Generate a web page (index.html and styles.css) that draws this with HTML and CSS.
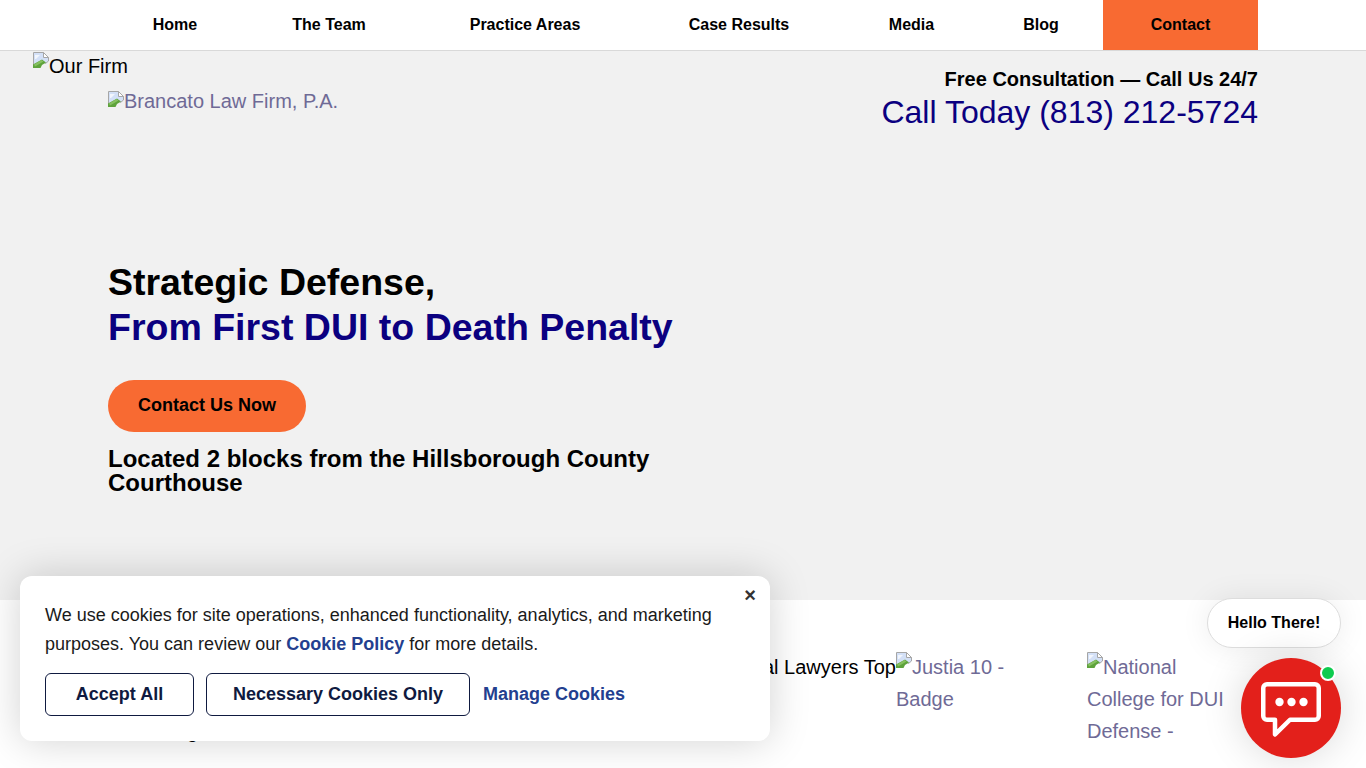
FILE: index.html
```html
<!DOCTYPE html>
<html lang="en">
<head>
  <meta charset="UTF-8" />
  <meta name="viewport" content="width=device-width, initial-scale=1.0" />
  <title>Brancato Law Firm, P.A.</title>
  <link rel="stylesheet" href="styles.css">
</head>
<body>
<svg class="defs" width="0" height="0" aria-hidden="true">
  <symbol id="broken" viewBox="0 0 16 16">
    <path d="M.5 .5H10.5L15.5 5.5V9L12.5 11.5 9.5 9 .5 15.5Z" fill="#d3e0f7" stroke="#a6a6a6" stroke-width="1" stroke-linejoin="round"/>
    <path d="M10.5 .5V5.5H15.5Z" fill="#fff" stroke="#a6a6a6" stroke-width="1" stroke-linejoin="round"/>
    <path d="M2 3H7L3 7 2 7Z" fill="#f2f6fd"/>
    <path d="M0 16V12.5L9 7.5 13 10.5 9 13 7.5 16Z" fill="#5ea33c"/>
    <path d="M1 12.5 8.5 8 10.5 9.5 2 14.5Z" fill="#86c060"/>
  </symbol>
</svg>

<nav class="main-nav">
  <ul class="nav-list">
    <li><a href="#">Home</a></li>
    <li><a href="#">The Team</a></li>
    <li><a href="#">Practice Areas</a></li>
    <li><a href="#">Case Results</a></li>
    <li><a href="#">Media</a></li>
    <li><a href="#">Blog</a></li>
    <li class="nav-contact"><a href="#">Contact</a></li>
  </ul>
</nav>

<section class="hero">
  <div class="firm-label"><svg class="broken-icon raised"><use href="#broken"/></svg>Our Firm</div>
  <div class="hero-inner">
    <div class="hero-top">
      <a class="logo" href="#"><svg class="broken-icon"><use href="#broken"/></svg>Brancato Law Firm, P.A.</a>
      <div class="phone-box">
        <div class="phone-free">Free Consultation — Call Us 24/7</div>
        <a class="phone-num" href="#">Call Today (813) 212-5724</a>
      </div>
    </div>
    <h1 class="hero-title">Strategic Defense,<br><span>From First DUI to Death Penalty</span></h1>
    <a class="hero-btn" href="#">Contact Us Now</a>
    <h2 class="hero-sub">Located 2 blocks from the Hillsborough County Courthouse</h2>
  </div>
</section>

<section class="badges">
  <div class="badge-first">
    <div class="badge-line-top">The National Trial Lawyers Top</div>
    <div class="badge-line-low">Rating</div>
  </div>
  <a class="badge badge-justia" href="#"><svg class="broken-icon raised"><use href="#broken"/></svg>Justia 10 - Badge</a>
  <a class="badge badge-college" href="#"><svg class="broken-icon raised"><use href="#broken"/></svg>National College for DUI Defense -</a>
</section>

<div class="cookie-box">
  <button class="cookie-close" aria-label="Close">×</button>
  <p>We use cookies for site operations, enhanced functionality, analytics, and marketing purposes. You can review our <a href="#">Cookie Policy</a> for more details.</p>
  <div class="cookie-actions">
    <button class="cookie-btn btn-accept">Accept All</button>
    <button class="cookie-btn btn-necessary">Necessary Cookies Only</button>
    <a class="cookie-manage" href="#">Manage Cookies</a>
  </div>
</div>

<div class="chat-widget">
  <div class="chat-hello">Hello There!</div>
  <div class="chat-circle">
    <span class="chat-dot"></span>
    <svg class="chat-icon" viewBox="0 0 60 56" width="60" height="56">
      <path d="M6 2.25H54A3.75 3.75 0 0 1 57.75 6V34A3.75 3.75 0 0 1 54 37.75H29L14 52.5V37.75H6A3.75 3.75 0 0 1 2.25 34V6A3.75 3.75 0 0 1 6 2.25Z" fill="none" stroke="#fff" stroke-width="4.5" stroke-linejoin="round"/>
      <circle cx="18.5" cy="20" r="4.2" fill="#fff"/>
      <circle cx="30.5" cy="20" r="4.2" fill="#fff"/>
      <circle cx="42.5" cy="20" r="4.2" fill="#fff"/>
    </svg>
  </div>
</div>

</body>
</html>
```

FILE: styles.css
```css
:root {
  --laranja: #f86a32;
  --navy: #0b0080;
  --cinza: #f1f1f1;
  --alt: #6f6a96;
}

* { box-sizing: border-box; margin: 0; padding: 0; }

html, body { height: 768px; overflow: hidden; }

body {
  font-family: 'Liberation Sans', Arial, sans-serif;
  font-size: 20px;
  line-height: 32px;
  color: #000;
  background: #fff;
}

a { color: inherit; text-decoration: none; }

.defs { display: block; height: 0; }

.broken-icon {
  width: 16px;
  height: 16px;
  vertical-align: baseline;
  margin-bottom: 1px;
}

.broken-icon.raised { margin-bottom: 6px; }

.main-nav {
  height: 51px;
  background: #fff;
  border-bottom: 1px solid #d9d9d9;
  padding-left: 108px;
}

.nav-list {
  list-style: none;
  display: grid;
  grid-template-columns: 134px 174px 218px 210px 135px 124px 155px;
  width: 1150px;
  height: 50px;
}

.nav-list li {
  display: flex;
  align-items: center;
  justify-content: center;
  font-size: 16px;
  font-weight: bold;
}

.nav-contact { background: var(--laranja); }

.hero {
  height: 549px;
  background: var(--cinza);
}

.firm-label {
  height: 32px;
  margin-left: 33px;
  line-height: 30px;
}

.firm-label .broken-icon.raised { margin-bottom: 5px; }

.hero-inner {
  width: 1150px;
  margin-left: 108px;
}

.hero-top {
  display: flex;
  justify-content: space-between;
  align-items: flex-start;
  height: 193px;
  margin-top: -16px;
}

.logo {
  color: var(--alt);
  margin-top: 18px;
}

.phone-box { text-align: right; }

.phone-free {
  font-weight: bold;
  height: 27px;
  line-height: 24px;
}

.phone-num {
  display: block;
  color: var(--navy);
  font-size: 32px;
  line-height: 36px;
}

.hero-title {
  font-size: 37.5px;
  line-height: 45px;
  margin-bottom: 30px;
}

.hero-title span { color: var(--navy); }

.hero-btn {
  display: inline-block;
  width: 198px;
  height: 52px;
  line-height: 50px;
  text-align: center;
  font-size: 18px;
  font-weight: bold;
  background: var(--laranja);
  border-radius: 26px;
}

.hero-sub {
  width: 575px;
  margin-top: 15px;
  font-size: 24px;
  line-height: 24px;
}

.badges {
  display: flex;
  align-items: flex-start;
  padding: 51px 0 0 108px;
  height: 168px;
  overflow: hidden;
}

.badge-first {
  width: 788px;
  flex-shrink: 0;
}

.badge-line-top { text-align: right; white-space: nowrap; }

.badge-line-low { margin: 32px 0 0 32px; }

.badge { color: var(--alt); display: block; }

.badge-justia { width: 191px; padding-right: 60px; }

.badge-college { width: 150px; }

.cookie-box {
  position: absolute;
  left: 20px;
  top: 576px;
  width: 750px;
  height: 165px;
  padding: 25px 25px 0;
  background: #fff;
  border-radius: 12px;
  box-shadow: 0 0 40px rgba(0,0,0,0.18);
  font-size: 18px;
  line-height: 29px;
  color: #1a1a1a;
}

.cookie-box p a {
  color: #233f8f;
  font-weight: bold;
}

.cookie-close {
  position: absolute;
  top: 7px;
  right: 14px;
  border: none;
  background: none;
  font-family: inherit;
  font-size: 20px;
  font-weight: bold;
  line-height: 24px;
  color: #333;
  cursor: pointer;
}

.cookie-actions {
  display: flex;
  align-items: center;
  margin-top: 14px;
}

.cookie-btn {
  height: 43px;
  margin-right: 12px;
  background: #fff;
  border: 1px solid #0f1a40;
  border-radius: 6px;
  font-family: inherit;
  font-size: 18px;
  font-weight: bold;
  color: #0f1a40;
  cursor: pointer;
}

.btn-accept { width: 149px; }

.btn-necessary { width: 264px; }

.cookie-manage {
  margin-left: 1px;
  font-weight: bold;
  color: #233f8f;
}

.chat-widget {
  position: absolute;
  right: 25px;
  top: 598px;
  width: 134px;
  display: flex;
  flex-direction: column;
  align-items: flex-end;
  gap: 10px;
}

.chat-hello {
  width: 134px;
  height: 50px;
  line-height: 47px;
  text-align: center;
  font-size: 16px;
  font-weight: bold;
  background: #fff;
  border: 1px solid #ddd;
  border-radius: 25px;
  box-shadow: 0 0 30px rgba(0,0,0,0.08);
}

.chat-circle {
  position: relative;
  display: flex;
  align-items: flex-start;
  justify-content: center;
  padding-top: 24px;
  width: 100px;
  height: 100px;
  background: #e3201b;
  border-radius: 50%;
  box-shadow: 0 0 40px rgba(0,0,0,0.15);
}

.chat-dot {
  position: absolute;
  top: 7px;
  right: 5px;
  width: 16px;
  height: 16px;
  background: #0ecb4f;
  border: 2px solid #fff;
  border-radius: 50%;
}
```
